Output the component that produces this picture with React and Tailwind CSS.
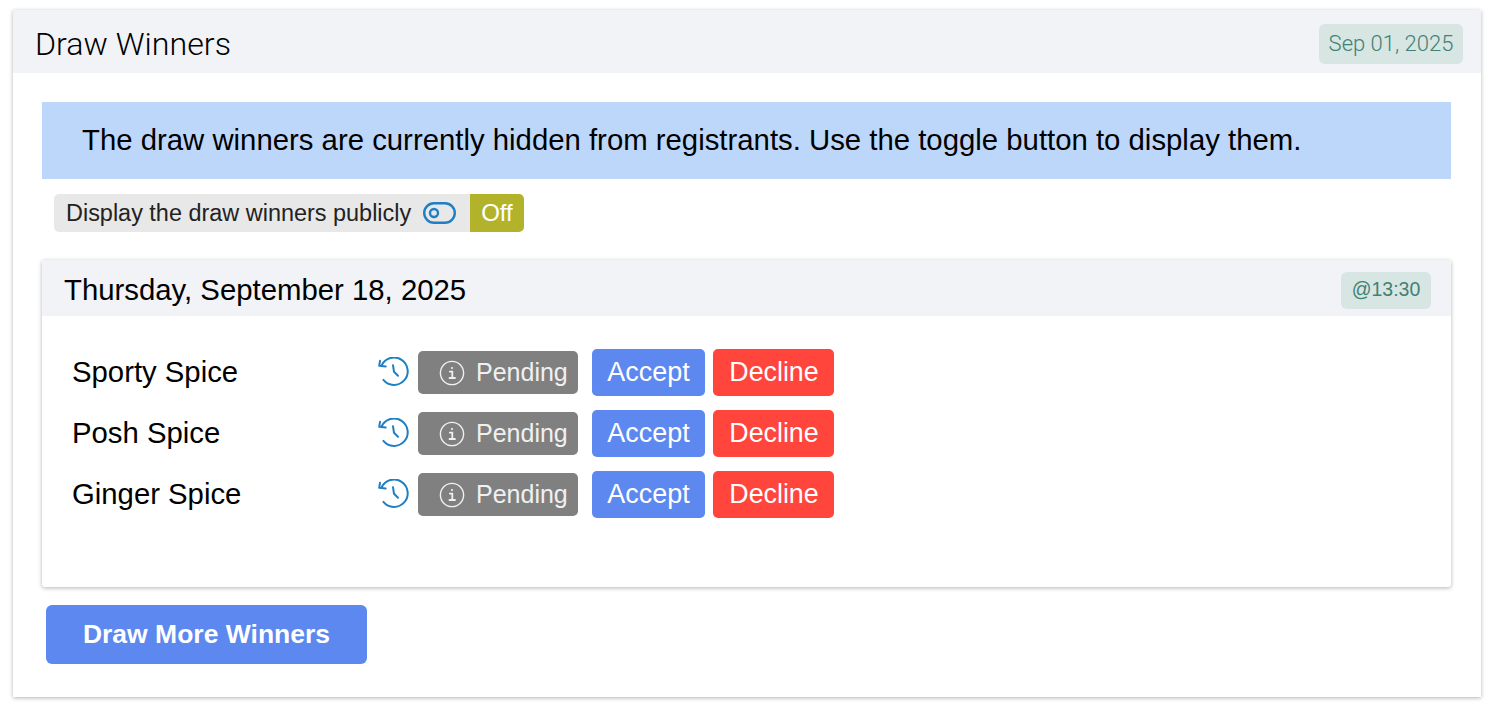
const SANS = "font-['Liberation_Sans',Arial,sans-serif]";

function HistoryIcon() {
  return (
    <svg width="32" height="32" viewBox="0 0 32 32" fill="none" stroke="#1f7fc4" strokeWidth="2" strokeLinecap="round" strokeLinejoin="round" className="shrink-0">
      <path d="M3.6 8.4A13.7 13.7 0 1 1 5.4 22.9" />
      <path d="M2 3.8 1.2 8.8 7.7 9.5" />
      <path d="M15 8.2 16 14.8 20 18.8" />
    </svg>
  );
}

function InfoIcon() {
  return (
    <svg width="26" height="26" viewBox="0 0 26 26" fill="none" stroke="#f0f0f0" strokeLinecap="round" className="shrink-0">
      <circle cx="13" cy="13" r="11.6" strokeWidth="1.4" />
      <circle cx="13" cy="8" r="1.1" fill="#f0f0f0" stroke="none" />
      <path d="M10.8 11.6H13.3V17.8M10.5 18H16" strokeWidth="1.8" />
    </svg>
  );
}

function ToggleIcon() {
  return (
    <svg width="33" height="22" viewBox="0 0 33 22" fill="none" stroke="#1f7fc4" className="shrink-0">
      <rect x="1.2" y="1.2" width="30.6" height="19.6" rx="9.8" strokeWidth="2.4" />
      <circle cx="11" cy="11" r="4" strokeWidth="2.4" />
    </svg>
  );
}

function Row({ name }) {
  return (
    <div className="flex items-center h-[47px]">
      <div className="w-[306px] shrink-0 pb-[2px] text-[29.3px] text-black">{name}</div>
      <HistoryIcon />
      <div className="ml-[8px] w-[160px] h-[43px] rounded-[5px] bg-[#808080] flex items-center pl-[21px] gap-[11px] text-[25px] text-[#f0f0f0]">
        <InfoIcon />
        <span>Pending</span>
      </div>
      <button className="ml-[14px] w-[113px] h-[47px] rounded-[5px] bg-[#5c88ef] text-white text-[27px] flex items-center justify-center">Accept</button>
      <button className="ml-[8px] w-[121px] h-[47px] pl-[1px] rounded-[5px] bg-[#ff453c] text-white text-[26.8px] flex items-center justify-center">Decline</button>
    </div>
  );
}

export default function App() {
  return (
    <div className={`bg-white w-[1490px] h-[708px] overflow-hidden pt-[10px] px-[13px] ${SANS}`}>
      <div className="w-[1468px] h-[687px] bg-white shadow-[0_1px_4px_rgba(0,0,0,0.3)]">
        <div className="h-[63px] bg-[#f1f3f7] flex items-center justify-between pt-[4px] pl-[22px] pr-[18px]">
          <h1 className="pt-[1px] font-['Roboto',sans-serif] font-light text-[32.2px] text-black">Draw Winners</h1>
          <span className="w-[144px] h-[40px] rounded-[6px] bg-[#d7e5e3] text-[#3f8274] font-['Roboto',sans-serif] font-light text-[22px] flex items-center justify-center">Sep 01, 2025</span>
        </div>
        <div className="pt-[29px] px-[29px]">
          <div className="w-[1409px] h-[77px] pb-[2px] bg-[#bdd7fb] flex items-center pl-[40px] text-[29.33px] text-black">
            The draw winners are currently hidden from registrants. Use the toggle button to display them.
          </div>
          <div className="mt-[15px] ml-[12px] flex w-fit h-[38px] rounded-[5px] overflow-hidden">
            <div className="w-[416px] bg-[#e8e8e8] text-[#222222] text-[23.45px] flex items-center pl-[12px] gap-[12px]">
              <span className="pt-[2px]">Display the draw winners publicly</span>
              <ToggleIcon />
            </div>
            <div className="w-[54px] bg-[#b3b32b] text-white text-[24px] flex items-center justify-center">Off</div>
          </div>
          <div className="mt-[28px] w-[1409px] h-[327px] bg-white rounded-[3px] shadow-[0_1px_4px_rgba(0,0,0,0.3)]">
            <div className="h-[56px] bg-[#f1f3f7] rounded-t-[3px] flex items-center justify-between pt-[4px] pl-[22px] pr-[20px]">
              <span className="text-[29.33px] text-black">Thursday, September 18, 2025</span>
              <span className="w-[90px] h-[37px] rounded-[6px] bg-[#d7e5e3] text-[#3f8274] text-[19.5px] flex items-center justify-center">@13:30</span>
            </div>
            <div className="pt-[33px] pl-[30px] flex flex-col gap-[14px]">
              <Row name="Sporty Spice" />
              <Row name="Posh Spice" />
              <Row name="Ginger Spice" />
            </div>
          </div>
          <button className="mt-[18px] ml-[4px] w-[321px] h-[59px] rounded-[6px] bg-[#5c88ef] text-white font-bold text-[26.5px] flex items-center justify-center">Draw More Winners</button>
        </div>
      </div>
    </div>
  );
}
